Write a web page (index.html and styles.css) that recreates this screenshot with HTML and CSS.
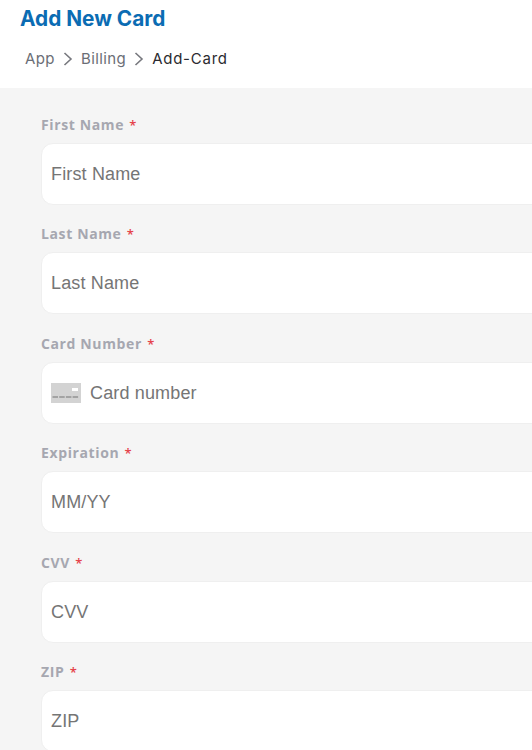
FILE: index.html
```html
<!DOCTYPE html>
<html lang="en">
<head>
  <meta charset="UTF-8" />
  <meta name="viewport" content="width=device-width, initial-scale=1.0" />
  <title>Add New Card</title>
  <link rel="stylesheet" href="styles.css">
</head>
<body>
  <header class="page-head">
    <h1 class="page-title">Add New Card</h1>
    <nav class="crumbs">
      <span class="crumb">App</span>
      <svg class="crumb-sep" width="10" height="14" viewBox="0 0 10 14"><path d="M1.5 1 L8 7 L1.5 13" fill="none" stroke="#77787e" stroke-width="1.6"/></svg>
      <span class="crumb">Billing</span>
      <svg class="crumb-sep" width="10" height="14" viewBox="0 0 10 14"><path d="M1.5 1 L8 7 L1.5 13" fill="none" stroke="#77787e" stroke-width="1.6"/></svg>
      <span class="crumb crumb-current">Add-Card</span>
    </nav>
  </header>

  <form class="card-form">
    <div class="field">
      <label class="field-label">First Name <span class="req">*</span></label>
      <div class="field-box"><span class="placeholder">First Name</span></div>
    </div>
    <div class="field">
      <label class="field-label">Last Name <span class="req">*</span></label>
      <div class="field-box"><span class="placeholder">Last Name</span></div>
    </div>
    <div class="field">
      <label class="field-label">Card Number <span class="req">*</span></label>
      <div class="field-box">
        <svg class="card-icon" width="30" height="20" viewBox="0 0 30 20">
          <rect width="30" height="20" fill="#d3d3d3"/>
          <rect x="21" y="5" width="6" height="3" fill="#fff"/>
          <path d="M1.5 14 H28" stroke="#a3a3a3" stroke-width="2" stroke-dasharray="5.5 1.2"/>
        </svg>
        <span class="placeholder">Card number</span>
      </div>
    </div>
    <div class="field">
      <label class="field-label">Expiration <span class="req">*</span></label>
      <div class="field-box"><span class="placeholder">MM/YY</span></div>
    </div>
    <div class="field">
      <label class="field-label">CVV <span class="req">*</span></label>
      <div class="field-box"><span class="placeholder">CVV</span></div>
    </div>
    <div class="field">
      <label class="field-label">ZIP <span class="req">*</span></label>
      <div class="field-box"><span class="placeholder">ZIP</span></div>
    </div>
  </form>
</body>
</html>
```

FILE: styles.css
```css
html, body {
  height: 100%;
  overflow: hidden;
}
body {
  margin: 0;
  background: #f5f5f5;
  font-family: "Liberation Sans", Arial, sans-serif;
}
.page-head {
  background: white;
  height: 88px;
  padding: 7px 0 0 20px;
  box-sizing: border-box;
}
.page-title {
  margin: 0;
  font-family: Inter, sans-serif;
  font-size: 20.8px;
  line-height: 24px;
  font-weight: 700;
  color: #0b6cb3;
}
.crumbs {
  display: flex;
  align-items: center;
  gap: 8px;
  margin: 16px 0 0 5px;
  font-family: Inter, sans-serif;
  font-size: 15px;
  line-height: 24px;
  letter-spacing: 0.4px;
}
.crumb {
  color: #6b6e76;
}
.crumb-current {
  color: #2b2b30;
  letter-spacing: 0.75px;
}
.card-form {
  width: 620px;
  padding: 24.9px 0 0 41px;
}
.field {
  margin-bottom: 17.5px;
}
.field-label {
  display: block;
  height: 22px;
  margin-bottom: 8px;
  font-family: "Open Sans", sans-serif;
  font-size: 14px;
  line-height: 24px;
  font-weight: 700;
  letter-spacing: 0.62px;
  color: #a6a7b0;
}
.req {
  margin-left: 1px;
  font-size: 13px;
  font-weight: 600;
  color: #e5434b;
}
.field-box {
  display: flex;
  align-items: center;
  gap: 9px;
  height: 62px;
  padding: 1px 0 0 9px;
  background: white;
  border: 1px solid #efefef;
  border-radius: 12px;
  box-sizing: border-box;
}
.placeholder {
  font-size: 18px;
  letter-spacing: 0.15px;
  color: #757575;
}
```
